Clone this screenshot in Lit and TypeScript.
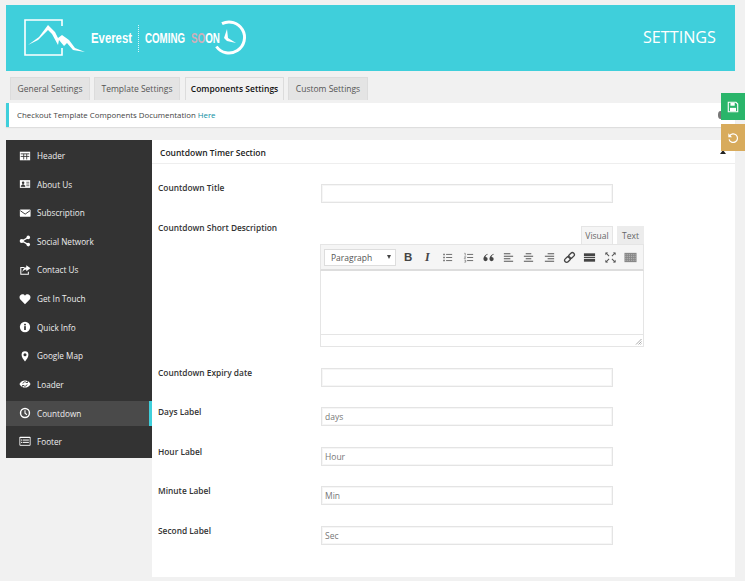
import { LitElement, css, html, svg } from "lit";
import { customElement } from "lit/decorators.js";

const navIcons: Record<string, unknown> = {
  header: svg`<rect x="1" y="2" width="12" height="10" fill="#fff"/><path d="M2 4.500h10M5.500 4.500v6.500M9 4.500v6.500M2 7.500h10" stroke="#333" stroke-width="1" fill="none"/>`,
  about: svg`<rect x="1" y="2.500" width="12" height="9" fill="#fff"/><circle cx="4.800" cy="5.500" r="1.500" fill="#333"/><path d="M2.500 10c0-3 4.500-3 4.500 0zM8.500 5h3.500M8.500 7h3.500M8.500 9h3.500" fill="#333" stroke="#333" stroke-width=".8"/>`,
  mail: svg`<rect x="1" y="3" width="12.500" height="8.500" rx="1" fill="#fff"/><path d="M1.500 4.300l5.700 4 5.700-4" stroke="#333" stroke-width="1.100" fill="none"/>`,
  share: svg`<path d="M10.500 3L3.500 7l7 4" stroke="#fff" stroke-width="1.500" fill="none"/><circle cx="10.800" cy="2.800" r="2.100" fill="#fff"/><circle cx="3.200" cy="7" r="2.400" fill="#fff"/><circle cx="10.800" cy="11.200" r="2.100" fill="#fff"/>`,
  contact: svg`<path d="M1.500 3.500h5v1.200H2.700v6.600h7.600V9h1.200v3.500h-10z" fill="#fff"/><path d="M8.500 1.500L13.500 5 8.500 8.500V6.500C6.500 6.500 5 7.500 4 9.500 4 6.500 6 4 8.500 3.700z" fill="#fff"/>`,
  heart: svg`<path d="M7 13L1.300 7.300C-.5 4.500 1.500 1.500 4 1.500c1.300 0 2.300.6 3 1.600.7-1 1.700-1.600 3-1.600 2.500 0 4.500 3 2.700 5.800z" fill="#fff"/>`,
  info: svg`<circle cx="7" cy="7" r="6" fill="#fff"/><rect x="6" y="6" width="2" height="4.500" fill="#333"/><rect x="6" y="3.300" width="2" height="1.800" fill="#333"/>`,
  pin: svg`<path d="M7 13.500C5 10.500 3 8.500 3 5.500a4 4 0 018 0c0 3-2 5-4 8z" fill="#fff"/><circle cx="7" cy="5.500" r="1.800" fill="#333"/>`,
  loader: svg`<path d="M.5 7C2 4 4.500 2.800 7 2.800S12 4 13.500 7C12 10 9.500 11.200 7 11.200S2 10 .5 7z" fill="#fff"/><path d="M4.500 6.500a2.600 2.600 0 014.600-1M9.500 7.500a2.600 2.600 0 01-4.600 1" stroke="#333" stroke-width="1" fill="none"/><path d="M8 5.800h2.300V3.600zM6 8.200H3.700v2.200z" fill="#333"/>`,
  clock: svg`<circle cx="7" cy="7" r="5.200" stroke="#fff" stroke-width="1.700" fill="none"/><path d="M7 3.800V7.300L9.300 9" stroke="#fff" stroke-width="1.300" fill="none"/>`,
  footer: svg`<rect x=".5" y="2" width="13" height="10.500" rx="1" fill="#fff"/><rect x="1.500" y="3.500" width="11" height="8" fill="#333"/><rect x="4.500" y="5.300" width="7" height="1.200" fill="#fff"/><rect x="4.500" y="8" width="7" height="1.200" fill="#fff"/><rect x="2.300" y="5.300" width="1.500" height="1.200" fill="#fff"/><rect x="2.300" y="8" width="1.500" height="1.200" fill="#fff"/>`,
};

const navItems = [
  ["Header", "header"],
  ["About Us", "about"],
  ["Subscription", "mail"],
  ["Social Network", "share"],
  ["Contact Us", "contact"],
  ["Get In Touch", "heart"],
  ["Quick Info", "info"],
  ["Google Map", "pin"],
  ["Loader", "loader"],
  ["Countdown", "clock"],
  ["Footer", "footer"],
];

const toolIcons = [
  svg`<path d="M2.500 3h1.500v1.500H2.500zM2.500 6.300h1.500v1.500H2.500zM2.500 9.500h1.500V11H2.500z" fill="#555"/><path d="M5.500 3.700H12M5.500 7H12M5.500 10.300H12" stroke="#666"/>`,
  svg`<path d="M2.500 2.500h1v2.500M2.500 6.200h1.500L2.500 8h1.500M2.500 9.800h1.500v2.200H2.500" stroke="#666" stroke-width=".7" fill="none"/><path d="M5.500 3.700H12M5.500 7H12M5.500 10.300H12" stroke="#666"/>`,
  svg`<path d="M6 3C3 4.500 1.500 6.500 1.500 8.700a2.300 2.300 0 102.300-2.300c0-1 .9-1.900 2.200-2.600zM12.500 3C9.500 4.500 8 6.500 8 8.700a2.300 2.300 0 102.300-2.300c0-1 .9-1.900 2.200-2.600z" fill="#444"/>`,
  svg`<path d="M2 3h7M2 5.700h10M2 8.400h7M2 11h10" stroke="#555" stroke-width="1.200"/>`,
  svg`<path d="M4 3h6M2 5.700h10M4 8.400h6M2 11h10" stroke="#555" stroke-width="1.200"/>`,
  svg`<path d="M5 3h7M2 5.700h10M5 8.400h7M2 11h10" stroke="#555" stroke-width="1.200"/>`,
  svg`<g transform="rotate(-45 7 7)" stroke="#444" stroke-width="1.400" fill="none"><rect x="0.500" y="4.800" width="7" height="4.400" rx="2.200"/><rect x="6.500" y="4.800" width="7" height="4.400" rx="2.200"/></g>`,
  svg`<rect x="1" y="2.500" width="12" height="3" fill="#444"/><rect x="1" y="6.300" width="12" height="1.300" fill="#444"/><rect x="1" y="8.500" width="12" height="3" fill="#444"/>`,
  svg`<path d="M2 2l3.500 3.500M12 2L8.500 5.500M2 12l3.500-3.500M12 12L8.500 8.500" stroke="#555" stroke-width="1.100"/><path d="M1.500 1.500h3l-3 3zM12.500 1.500v3l-3-3zM1.500 12.500v-3l3 3zM12.500 12.500h-3l3-3z" fill="#555"/>`,
  svg`<rect x=".5" y="2" width="13" height="10" fill="#888"/><path d="M1.500 4h11M1.500 6h11M1.500 8h11M1.500 10h11" stroke="#ccc" stroke-width=".8" stroke-dasharray="1 1"/>`,
];

const labelFields = [
  ["Days Label", "days"],
  ["Hour Label", "Hour"],
  ["Minute Label", "Min"],
  ["Second Label", "Sec"],
];

@customElement("app-root")
export class AppRoot extends LitElement {
  static styles = css`
    :host {
      display: block;
      position: relative;
      height: 581px;
      overflow: hidden;
      background: #f1f1f1;
      color: #444;
      font-family: "Open Sans", "Liberation Sans", sans-serif;
      font-size: 8.5px;
    }
    .page {
      display: flex;
      flex-direction: column;
      padding: 5px 10px 0 6px;
    }
    .banner {
      display: flex;
      align-items: center;
      justify-content: space-between;
      height: 66px;
      background: #3fcfdb;
      padding: 0 19px 0 17px;
    }
    .banner svg {
      display: block;
    }
    .logo-text {
      fill: #fff;
      font-family: "Liberation Sans", sans-serif;
      font-weight: 700;
      font-size: 14px;
    }
    .logo-text.name {
      font-size: 15px;
    }
    .logo-text tspan {
      fill: #cdb0ba;
    }
    .settings {
      color: #fff;
      font-size: 16.2px;
      line-height: 1;
      padding-bottom: 2px;
    }
    .tabs {
      display: flex;
      gap: 4px;
      padding: 6px 0 0 4px;
      height: 23px;
    }
    .tab {
      display: flex;
      align-items: center;
      justify-content: center;
      background: #e4e4e4;
      border: 1px solid #dcdcdc;
      border-bottom: none;
      color: #555;
      box-sizing: border-box;
      height: 23px;
      padding-bottom: 1px;
    }
    .tab.active {
      background: #f1f1f1;
      color: #111;
      font-weight: 600;
      margin-left: 1px;
    }
    .notice {
      display: flex;
      align-items: center;
      height: 24px;
      margin-top: 3px;
      padding-left: 8px;
      background: #fff;
      border-left: 3px solid #3fcfdb;
      box-shadow: 0 1px 1px rgba(0, 0, 0, 0.08);
      font-size: 7.85px;
    }
    .notice a {
      color: #0e8fa3;
      margin-left: 2px;
    }
    .body {
      display: flex;
      align-items: flex-start;
      margin-top: 13px;
    }
    .nav {
      flex: none;
      width: 146px;
      height: 318px;
      background: #333;
      display: flex;
      flex-direction: column;
      padding-top: 1.3px;
      box-sizing: border-box;
      font-size: 8.2px;
    }
    .nav-item {
      display: flex;
      align-items: center;
      gap: 6px;
      height: 28.6px;
      flex: none;
      padding-left: 13px;
      color: #eee;
      box-sizing: border-box;
    }
    .nav-item.active {
      background: #4a4a4a;
      border-right: 3px solid #3fcfdb;
      height: 25px;
      margin: 2.2px 0 1.100px;
    }
    .nav-item svg {
      flex: none;
      width: 12px;
      height: 12px;
    }
    .panel {
      flex: 1;
      height: 437px;
      background: #fff;
      box-sizing: border-box;
    }
    .panel-head {
      display: flex;
      align-items: center;
      justify-content: space-between;
      height: 24px;
      padding: 1px 9px 0 8px;
      box-sizing: border-box;
      border-bottom: 1px solid #eee;
      color: #222;
      font-weight: 600;
    }
    .arrow {
      width: 0;
      height: 0;
      border-left: 3px solid transparent;
      border-right: 3px solid transparent;
      border-bottom: 4px solid #222;
    }
    .form {
      display: flex;
      flex-direction: column;
      padding: 20px 0 0 6px;
    }
    .row {
      display: flex;
      align-items: flex-start;
      margin-bottom: 20.4px;
    }
    .row label {
      flex: none;
      width: 163px;
      color: #333;
      font-weight: 600;
      font-size: 8.35px;
      line-height: 8px;
      padding-top: 1px;
    }
    .field {
      width: 292px;
      height: 19px;
      box-sizing: border-box;
      border: 1px solid #e4e4e4;
      box-shadow: inset 0 0 0 1px #f6f6f6;
      background: #fff;
      padding-left: 3px;
      display: flex;
      align-items: center;
      color: #777;
    }
    .row.title {
      margin-bottom: 23px;
    }
    .row.title label {
      padding-top: 0;
    }
    .row.desc {
      margin-bottom: 21px;
    }
    .row.desc label {
      padding-top: 0;
      margin-top: -2px;
    }
    .editor {
      display: flex;
      flex-direction: column;
      width: 324px;
      margin-left: -1px;
    }
    .modes {
      display: flex;
      justify-content: flex-end;
      gap: 4px;
      height: 18px;
    }
    .mode {
      display: flex;
      align-items: center;
      justify-content: center;
      width: 27px;
      height: 18px;
      background: #ececec;
      color: #666;
    }
    .mode.on {
      width: 32px;
      background: #f5f5f5;
      border: 1px solid #e5e5e5;
      border-bottom: none;
      box-sizing: border-box;
    }
    .toolbar {
      display: flex;
      align-items: center;
      height: 27px;
      box-sizing: border-box;
      background: #f5f5f5;
      border: 1px solid #e5e5e5;
      border-bottom: 2px solid #ddd;
      padding-left: 3px;
    }
    .select {
      display: flex;
      align-items: center;
      justify-content: space-between;
      width: 72px;
      height: 17px;
      box-sizing: border-box;
      flex: none;
      background: #fff;
      border: 1px solid #ddd;
      padding: 0 4px 0 6px;
      color: #555;
    }
    .select i {
      border-left: 2.500px solid transparent;
      border-right: 2.500px solid transparent;
      border-top: 4px solid #444;
    }
    .tools {
      display: flex;
      margin-left: 2px;
    }
    .tool {
      display: flex;
      align-items: center;
      justify-content: center;
      width: 20.300px;
      height: 18px;
      color: #444;
      font-family: "Liberation Serif", serif;
      font-size: 12px;
    }
    .tool.b {
      font-family: "Liberation Sans", sans-serif;
      font-weight: 700;
      font-size: 11.5px;
    }
    .tool.i {
      font-style: italic;
      font-weight: 700;
      margin-left: -1px;
    }
    .tool svg {
      width: 13px;
      height: 13px;
    }
    .edit-area {
      height: 63px;
      box-sizing: border-box;
      border-left: 1px solid #e5e5e5;
      border-right: 1px solid #e5e5e5;
      background: #fff;
    }
    .status {
      display: flex;
      justify-content: flex-end;
      align-items: flex-end;
      height: 13px;
      box-sizing: border-box;
      border: 1px solid #e5e5e5;
      padding: 0 1px 1px 0;
    }
    .status svg {
      width: 7px;
      height: 7px;
    }
    .float {
      position: absolute;
      left: 721px;
      width: 24px;
      height: 27px;
      display: flex;
      align-items: center;
      justify-content: center;
    }
    .float svg {
      width: 12px;
      height: 12px;
    }
    .save {
      top: 93px;
      background: #2ab56a;
    }
    .reset {
      top: 124px;
      background: #d8ab5c;
    }
    .peek {
      position: absolute;
      left: 718px;
      top: 111px;
      width: 5px;
      height: 8px;
      border-radius: 50%;
      background: #777;
    }
  `;

  logo() {
    // the logo type is condensed, so the words are squeezed with a scale
    return html`<svg width="240" height="40" viewBox="0 0 240 40">
      <path
        d="M39 8V2H2V37H39V30"
        fill="none"
        stroke="#fff"
        stroke-width="1.600"
      />
      <path
        d="M5 27L16 19 25 7 32 14 35 20 39 17 46 22 52 30 62 34 50 32 44 25 41 28 36 22 35 27 29 16 25 12 15 22z"
        fill="#fff"
      />
      <g transform="translate(68 25) scale(.757 1)">
        <text class="logo-text name">Everest</text>
      </g>
      <path d="M115.500 7V35" stroke="#fff" stroke-width=".8" stroke-dasharray="1 1" />
      <g transform="translate(122 25) scale(.695 1)">
        <text class="logo-text">COMING</text>
      </g>
      <g transform="translate(168 25) scale(.7 1)">
        <text class="logo-text"><tspan>SO</tspan>ON</text>
      </g>
      <path
        d="M199 5.700A15.500 15.500 0 1 1 193.400 28.500"
        fill="none"
        stroke="#fff"
        stroke-width="3"
      />
      <path d="M204 11L205 20 213 25 204 23 201 20z" fill="#fff" />
    </svg>`;
  }

  render() {
    return html`
      <div class="page">
        <div class="banner">
          ${this.logo()}
          <span class="settings">SETTINGS</span>
        </div>
        <div class="tabs">
          <div class="tab" style="width:80px">General Settings</div>
          <div class="tab" style="width:86px">Template Settings</div>
          <div class="tab active" style="width:99px">Components Settings</div>
          <div class="tab" style="width:80px">Custom Settings</div>
        </div>
        <div class="notice">
          Checkout Template Components Documentation <a>Here</a>
        </div>
        <div class="body">
          <nav class="nav">
            ${navItems.map(
              ([name, icon]) => html`<div
                class="nav-item ${name === "Countdown" ? "active" : ""}"
              >
                <svg viewBox="0 0 14 14">${navIcons[icon]}</svg>${name}
              </div>`
            )}
          </nav>
          <section class="panel">
            <div class="panel-head">
              Countdown Timer Section <span class="arrow"></span>
            </div>
            <div class="form">
              <div class="row title">
                <label>Countdown Title</label>
                <div class="field"></div>
              </div>
              <div class="row desc">
                <label>Countdown Short Description</label>
                <div class="editor">
                  <div class="modes">
                    <div class="mode on">Visual</div>
                    <div class="mode">Text</div>
                  </div>
                  <div class="toolbar">
                    <div class="select">Paragraph<i></i></div>
                    <div class="tools">
                      <span class="tool b">B</span>
                      <span class="tool i">I</span>
                      ${toolIcons.map(
                        (icon) => html`<span class="tool"
                          ><svg viewBox="0 0 14 14">${icon}</svg></span
                        >`
                      )}
                    </div>
                  </div>
                  <div class="edit-area"></div>
                  <div class="status">
                    <svg viewBox="0 0 7 7">
                      <path d="M6.500 1L1 6.500M6.500 3.500L3.500 6.500M6.500 5.500L5.500 6.500" stroke="#aaa" />
                    </svg>
                  </div>
                </div>
              </div>
              <div class="row">
                <label>Countdown Expiry date</label>
                <div class="field"></div>
              </div>
              ${labelFields.map(
                ([name, value]) => html`<div class="row">
                  <label>${name}</label>
                  <div class="field">${value}</div>
                </div>`
              )}
            </div>
          </section>
        </div>
      </div>
      <span class="peek"></span>
      <div class="float save">
        <svg viewBox="0 0 14 14">
          <path
            d="M1.500 1.500H10.500L12.500 3.500V12.500H1.500z"
            fill="none"
            stroke="#fff"
            stroke-width="1.300"
          />
          <rect x="4" y="2" width="5" height="3.500" fill="#fff" />
          <rect x="3.500" y="8" width="7" height="4" fill="#fff" />
        </svg>
      </div>
      <div class="float reset">
        <svg viewBox="0 0 14 14">
          <path
            d="M3 4.500a5 5 0 11-.6 4"
            fill="none"
            stroke="#fff"
            stroke-width="1.400"
          />
          <path d="M1.500 1.500V6H6z" fill="#fff" />
        </svg>
      </div>
    `;
  }
}
